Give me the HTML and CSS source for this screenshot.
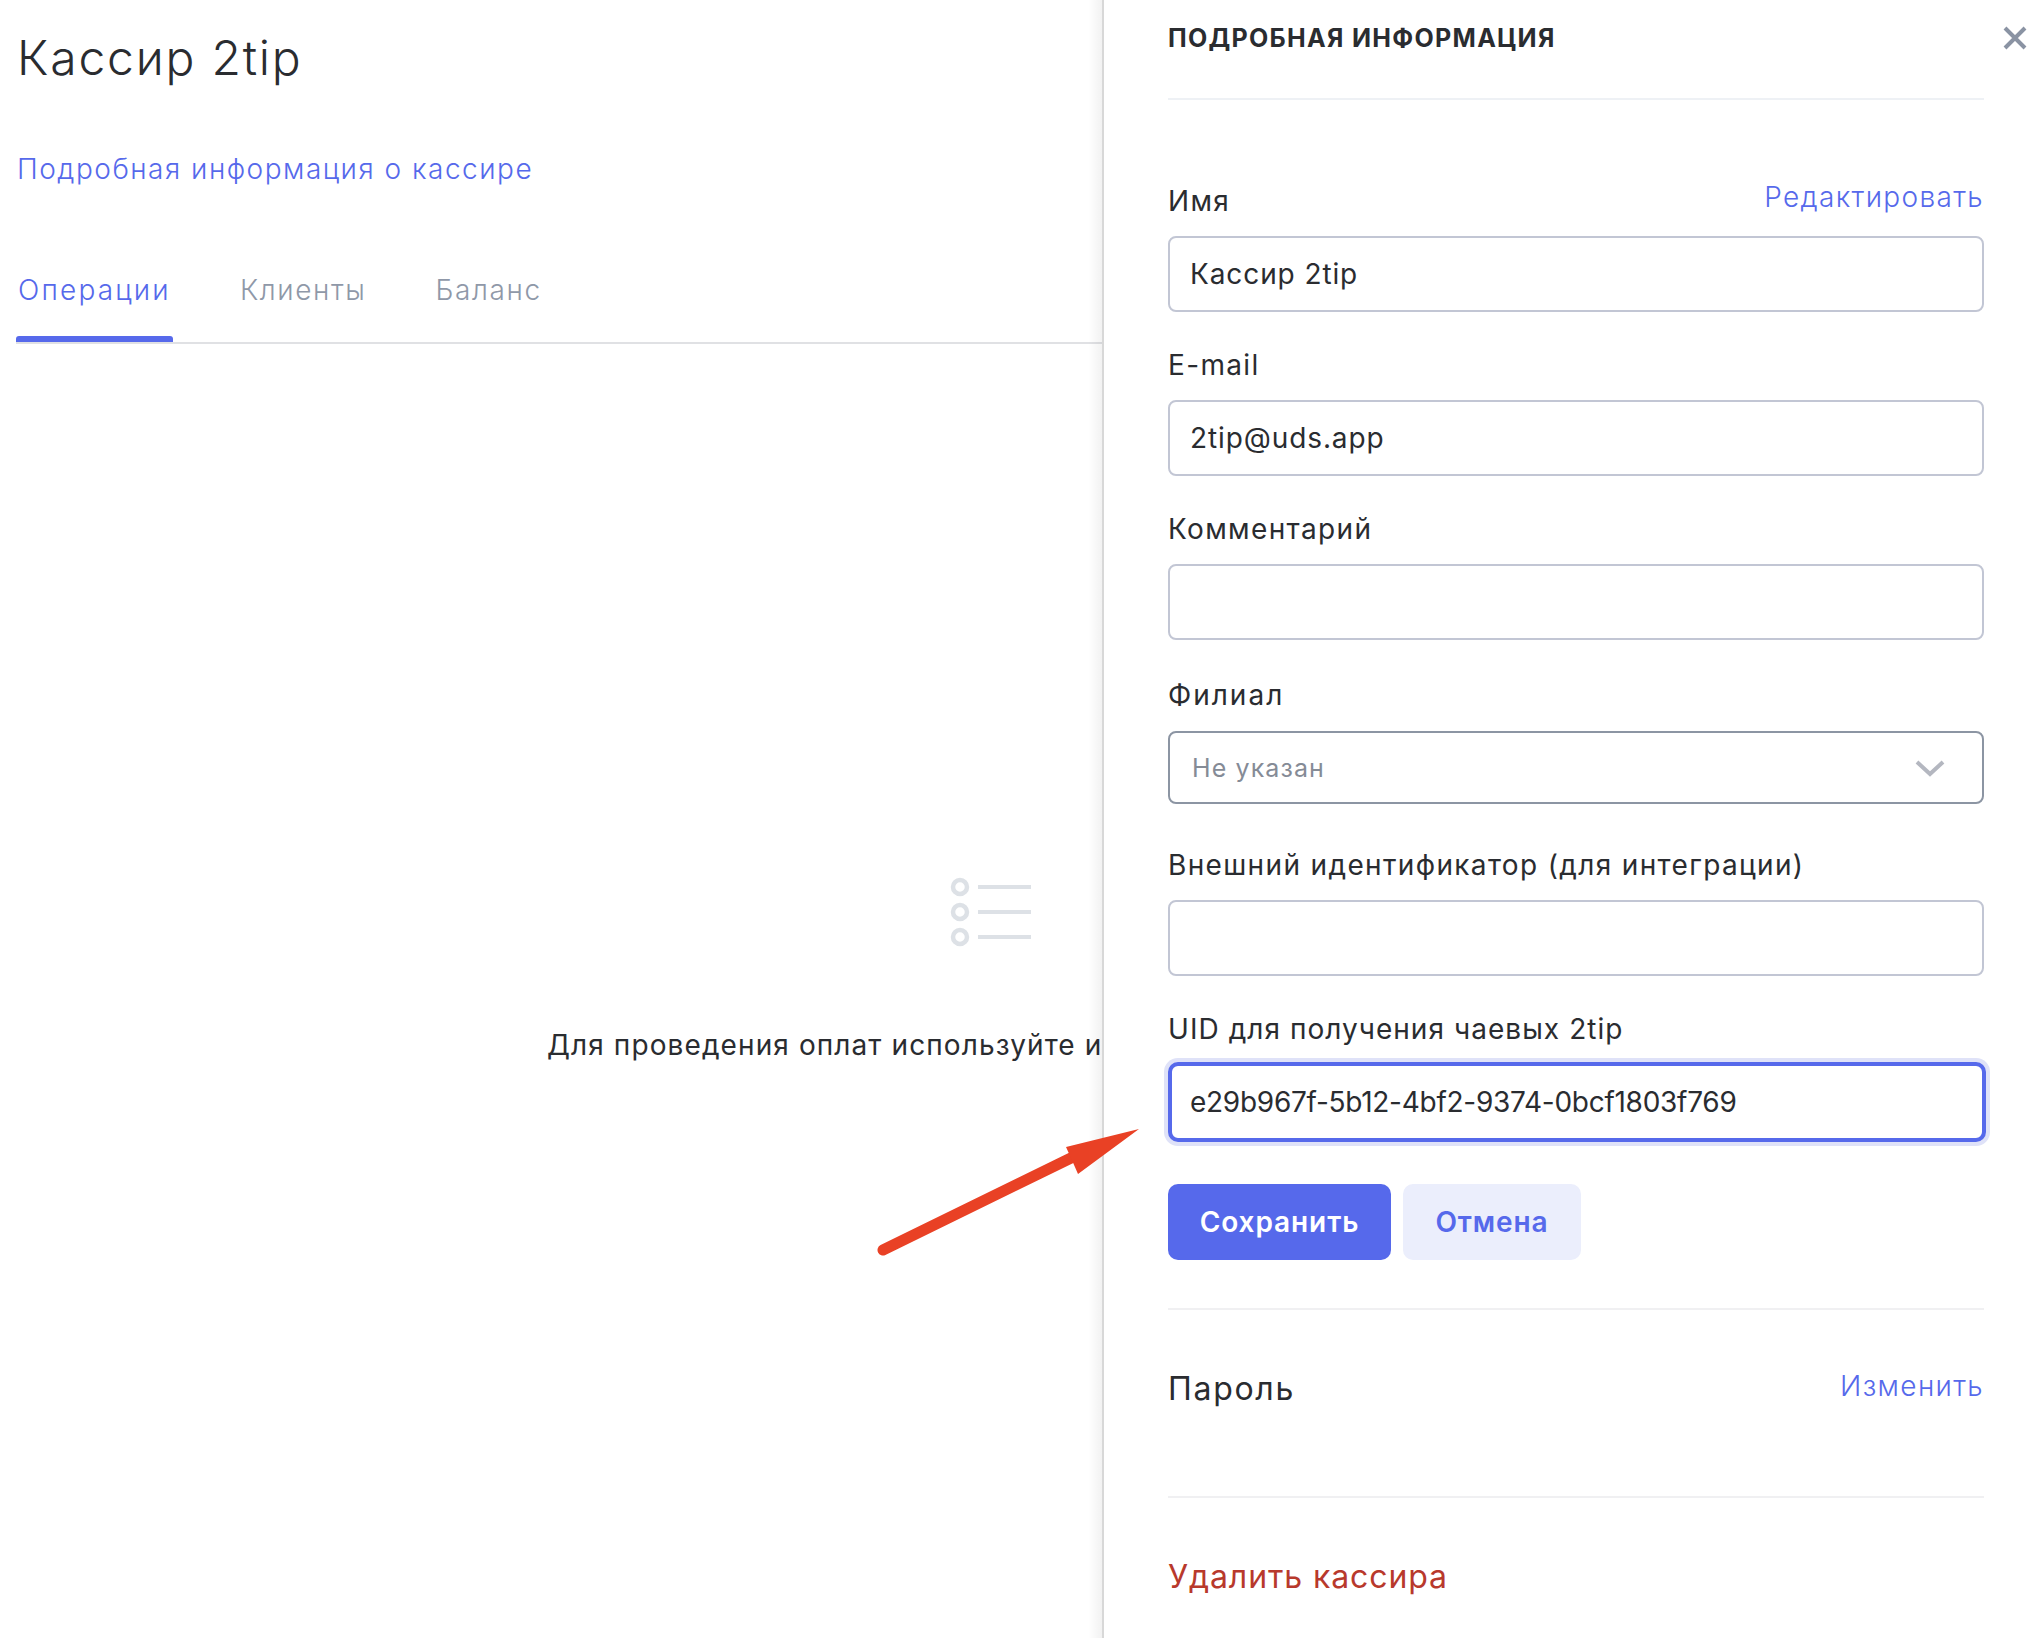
FILE: index.html
```html
<!DOCTYPE html>
<html lang="ru">
<head>
<meta charset="utf-8">
<title>Кассир 2tip</title>
<link rel="stylesheet" href="styles.css">
</head>
<body>
<div class="app">
  <main class="main">
    <h1 class="page-title">Кассир 2tip</h1>
    <a class="info-link">Подробная информация о кассире</a>
    <nav class="tabs">
      <span class="tab tab-active">Операции</span>
      <span class="tab">Клиенты</span>
      <span class="tab">Баланс</span>
    </nav>
    <section class="empty">
      <svg class="empty-icon" width="66" height="70" viewBox="0 0 66 70" fill="none">
        <g stroke="#dde1e6">
          <g stroke-width="4.5"><circle cx="10" cy="10" r="7"/><circle cx="10" cy="35" r="7"/><circle cx="10" cy="60" r="7"/></g>
          <path stroke-width="4" d="M28 10h53M28 35h53M28 60h53"/>
        </g>
      </svg>
      <p class="empty-text">Для проведения оплат используйте и</p>
    </section>
  </main>
  <aside class="panel">
    <header class="panel-head">
      <h2 class="panel-title">ПОДРОБНАЯ ИНФОРМАЦИЯ</h2>
    </header>
    <button class="close" aria-label="Закрыть">
      <svg width="26" height="26" viewBox="0 0 26 26" fill="none"><path d="M3 3l20 20M23 3L3 23" stroke="#8a93a3" stroke-width="4"/></svg>
    </button>
    <form class="form">
      <div class="field first">
        <div class="label-row"><span class="label">Имя</span><a class="action edit">Редактировать</a></div>
        <div class="input">Кассир 2tip</div>
      </div>
      <div class="field">
        <div class="label-row"><span class="label">E-mail</span></div>
        <div class="input">2tip@uds.app</div>
      </div>
      <div class="field">
        <div class="label-row"><span class="label">Комментарий</span></div>
        <div class="input"></div>
      </div>
      <div class="field select-field">
        <div class="label-row"><span class="label label-wide">Филиал</span></div>
        <div class="select">
          <span>Не указан</span>
          <svg width="30" height="18" viewBox="0 0 30 18" fill="none"><path d="M2 3l13 12L28 3" stroke="#b4b7c0" stroke-width="4"/></svg>
        </div>
      </div>
      <div class="field after-select">
        <div class="label-row"><span class="label">Внешний идентификатор (для интеграции)</span></div>
        <div class="input"></div>
      </div>
      <div class="field">
        <div class="label-row"><span class="label label-tight">UID для получения чаевых 2tip</span></div>
        <div class="input focused">e29b967f-5b12-4bf2-9374-0bcf1803f769</div>
      </div>
      <div class="buttons">
        <button type="button" class="btn btn-primary">Сохранить</button>
        <button type="button" class="btn btn-soft">Отмена</button>
      </div>
    </form>
    <div class="row password-row">
      <span class="row-title">Пароль</span>
      <a class="action">Изменить</a>
    </div>
    <div class="delete-row"><a class="delete">Удалить кассира</a></div>
  </aside>
</div>
<svg class="arrow" width="2032" height="1638" viewBox="0 0 2032 1638">
  <path d="M883 1250L1071 1158" stroke="#e94125" stroke-width="11" stroke-linecap="round" fill="none"/>
  <path d="M1139 1129L1066 1147L1071 1158L1078 1174Z" fill="#e94125"/>
</svg>
</body>
</html>
```

FILE: styles.css
```css
* { box-sizing: border-box; }
html, body { margin: 0; height: 100%; overflow: hidden; background: #fff; }
body { font-family: Inter, "Noto Sans", "Liberation Sans", sans-serif; color: #2a2c30; }
.app { display: flex; height: 1638px; }
.main { width: 1102px; flex: none; padding: 0 0 0 16px; overflow: hidden; position: relative; }
.page-title { margin: 32px 0 0 1px; font-size: 48px; line-height: 52px; font-weight: 300; letter-spacing: 1.8px; }
.info-link { display: block; margin: 67px 0 0 1px; font-size: 28px; line-height: 36px; font-weight: 300; letter-spacing: 1.5px; color: #5669eb; }
.tabs { display: flex; margin-top: 85px; height: 72px; border-bottom: 2px solid #e0e1e4; }
.tab { font-size: 28px; line-height: 36px; font-weight: 300; color: #8f98a8; letter-spacing: 1.6px; padding: 0 2px; margin-right: 65px; position: relative; height: 70px; }
.tab-active { color: #5669eb; letter-spacing: 2.2px; }
.tab-active::after { content: ""; position: absolute; left: 0; right: 0; bottom: 0; height: 6px; background: #5669eb; border-radius: 3px 3px 0 0; }
.empty { padding-top: 533px; position: relative; }
.empty-icon { display: block; margin-left: 934px; overflow: visible; }
.empty-text { margin: 80px 0 0 531px; font-size: 28px; line-height: 36px; font-weight: 400; letter-spacing: 1.1px; white-space: nowrap; }
.panel { flex: 1; position: relative; padding: 0 48px 0 64px; border-left: 2px solid #d8d8d8; }
.panel::before { content: ""; position: absolute; left: -16px; top: 0; bottom: 0; width: 14px; background: linear-gradient(to right, rgba(0,0,0,0), rgba(0,0,0,.05)); }
.panel-head { height: 100px; padding-top: 21px; border-bottom: 2px solid #eef1f5; }
.panel-title { margin: 0; font-size: 25px; line-height: 34px; font-weight: 700; letter-spacing: 1.3px; color: #2a2c30; }
.close { position: absolute; right: 4px; top: 25px; border: 0; padding: 0; background: none; display: block; width: 26px; height: 26px; }
.close svg { display: block; }
.form { display: block; }
.field { margin-top: 35px; }
.field.first { margin-top: 83px; }
.field.select-field { margin-top: 37px; }
.select-field .label-row { margin-bottom: 18px; }
.field.after-select { margin-top: 43px; }
.label-row { display: flex; justify-content: space-between; align-items: flex-start; height: 36px; margin-bottom: 17px; }
.label { font-size: 28px; line-height: 36px; font-weight: 400; letter-spacing: 1.35px; }
.label-tight { letter-spacing: 1.05px; }
.label-wide { letter-spacing: 2px; }
.action { font-size: 28px; line-height: 36px; font-weight: 300; letter-spacing: 1.35px; color: #5669eb; margin-top: -4px; }
.input { height: 76px; border: 2px solid #c2c6d4; border-radius: 8px; padding: 0 20px; display: flex; align-items: center; font-size: 28px; font-weight: 400; letter-spacing: .9px; background: #fff; }
.input.focused { border: 4px solid #5669eb; border-radius: 10px; box-shadow: 0 0 0 4px #dfe2f8; margin-right: -2px; padding: 0 18px; height: 80px; margin-top: -2px; letter-spacing: -.27px; }
.select { height: 73px; border: 2px solid #8c95a3; border-radius: 8px; padding: 0 37px 0 22px; display: flex; align-items: center; justify-content: space-between; font-size: 25px; font-weight: 400; letter-spacing: 1.1px; color: #858b96; }
.buttons { display: flex; gap: 12px; margin-top: 42px; padding-bottom: 48px; border-bottom: 2px solid #f0f0f2; }
.btn { height: 76px; border: 0; border-radius: 10px; font-family: inherit; font-size: 28px; font-weight: 600; letter-spacing: .9px; }
.btn-primary { width: 223px; background: #5669eb; color: #fff; }
.btn-soft { width: 178px; background: #ebeefc; color: #5669eb; }
.row { display: flex; justify-content: space-between; align-items: flex-start; }
.password-row { height: 188px; padding-top: 58px; border-bottom: 2px solid #f0f0f2; }
.row-title { font-size: 32px; line-height: 42px; font-weight: 400; letter-spacing: 1.7px; }
.password-row .action { margin-top: 0; }
.delete-row { padding-top: 58px; }
.delete { font-size: 32px; line-height: 42px; font-weight: 400; letter-spacing: .9px; color: #b8392c; }
.arrow { position: absolute; left: 0; top: 0; pointer-events: none; }
```
